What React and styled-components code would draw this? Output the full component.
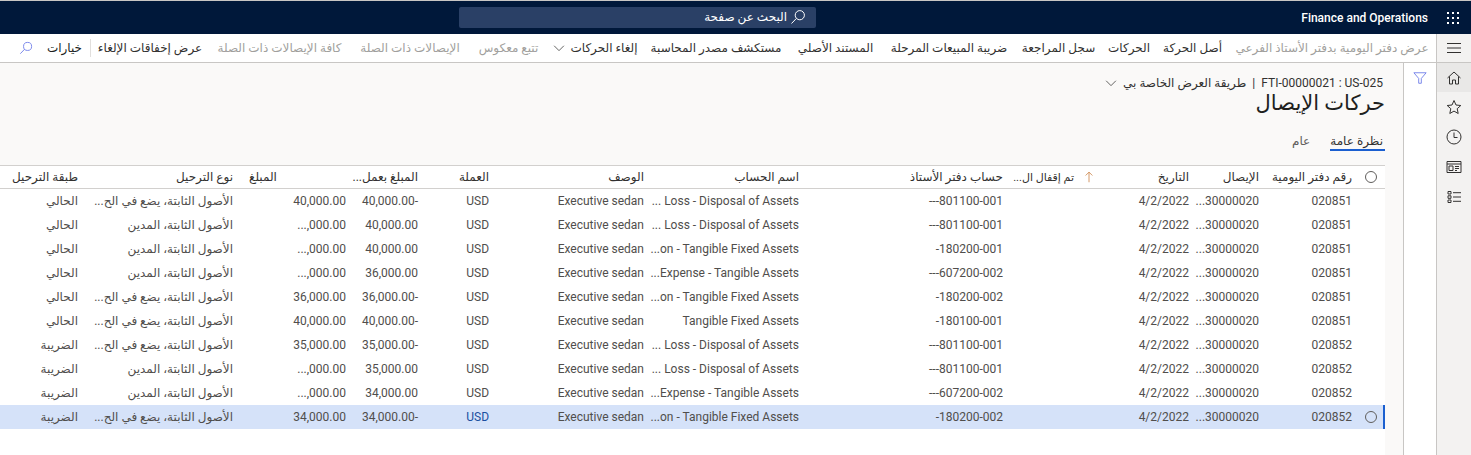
import React from 'react'
import styled, { createGlobalStyle } from 'styled-components'

const GlobalStyle = createGlobalStyle`
  html, body { margin: 0; padding: 0; height: 100%; background: #fff; }
  body { font-family: Roboto, "DejaVu Sans", sans-serif; font-size: 12px; color: #323130; overflow: hidden; }
  * { box-sizing: border-box; }
`

const columns = '25px 93px 70px 100px 86px 204px 155px 155px 71px 72px 113px 155px 86px'

const actions = [
  { label: 'عرض دفتر اليومية بدفتر الأستاذ الفرعي', width: 190, off: true },
  { label: 'أصل الحركة', width: 55 },
  { label: 'الحركات', width: 38 },
  { label: 'سجل المراجعة', width: 69 },
  { label: 'ضريبة المبيعات المرحلة', width: 116 },
  { label: 'المستند الأصلي', width: 77 },
  { label: 'مستكشف مصدر المحاسبة', width: 128 },
  { label: 'إلغاء الحركات', width: 79, menu: true },
  { label: 'تتبع معكوس', width: 61, off: true },
  { label: 'الإيصالات ذات الصلة', width: 102, off: true },
  { label: 'كافة الإيصالات ذات الصلة', width: 125, off: true },
  { label: 'عرض إخفاقات الإلغاء', width: 100 },
]

const headers = ['رقم دفتر اليومية', 'الإيصال', 'التاريخ', 'تم إقفال ال...', 'حساب دفتر الأستاذ', 'اسم الحساب', 'الوصف', 'العملة', 'المبلغ بعمل...', 'المبلغ', 'نوع الترحيل', 'طبقة الترحيل']

const LOSS = '... Loss - Disposal of Assets'
const DEP = '...on - Tangible Fixed Assets'
const EXP = '...Expense - Tangible Assets'
const CREDIT = 'الأصول الثابتة، يضع في الح...'
const DEBIT = 'الأصول الثابتة، المدين'
const CUT = '...,000.00'

const rows = [
  ['020851', '---801100-001', LOSS, '-40,000.00', '40,000.00', CREDIT, 'الحالي'],
  ['020851', '---801100-001', LOSS, '40,000.00', CUT, DEBIT, 'الحالي'],
  ['020851', '-180200-001', DEP, '40,000.00', CUT, DEBIT, 'الحالي'],
  ['020851', '---607200-002', EXP, '36,000.00', CUT, DEBIT, 'الحالي'],
  ['020851', '-180200-002', DEP, '-36,000.00', '36,000.00', CREDIT, 'الحالي'],
  ['020851', '-180100-001', 'Tangible Fixed Assets', '-40,000.00', '40,000.00', CREDIT, 'الحالي'],
  ['020852', '---801100-001', LOSS, '-35,000.00', '35,000.00', CREDIT, 'الضريبة'],
  ['020852', '---801100-001', LOSS, '35,000.00', CUT, DEBIT, 'الضريبة'],
  ['020852', '---607200-002', EXP, '34,000.00', CUT, DEBIT, 'الضريبة'],
  ['020852', '-180200-002', DEP, '-34,000.00', '34,000.00', CREDIT, 'الضريبة'],
]

const Page = styled.div`
  width: 1471px;
  height: 455px;
  display: flex;
  flex-direction: column;
  direction: rtl;
  overflow: hidden;
`

const NavBar = styled.header`
  flex: 0 0 34px;
  display: grid;
  grid-template-columns: 655px 357px 1fr;
  align-items: center;
  background: #00183a;
  border-top: 1px solid #c8c6c4;
`

const Brand = styled.div`
  display: flex;
  align-items: center;
  gap: 18px;
  padding-right: 11px;
  color: #fff;
  font-weight: 500;
  font-size: 12px;
`

const SearchBox = styled.div`
  height: 21px;
  margin-top: -1px;
  display: flex;
  align-items: center;
  gap: 3px;
  padding-right: 10px;
  background: #2a4066;
  border-radius: 2px;
  color: #fff;
`

const ActionRow = styled.div`
  flex: 0 0 29px;
  display: flex;
  background: #fff;
  border-bottom: 1px solid #c8c6c4;
`

const MenuCell = styled.div`
  flex: 0 0 35px;
  display: flex;
  align-items: center;
  justify-content: center;
  border-left: 1px solid #c8c6c4;
  background: #f3f2f1;
`

const ActionBar = styled.nav`
  flex: 1;
  display: flex;
  align-items: center;
  gap: 17px;
  padding-right: 9px;
  white-space: nowrap;
`

const Action = styled.span`
  flex: 0 0 ${p => p.$width}px;
  min-width: 0;
  display: inline-flex;
  align-items: center;
  justify-content: center;
  gap: 5px;
  color: ${p => (p.$off ? '#a19f9d' : '#323130')};

  svg {
    flex: none;
  }
`

const Options = styled.div`
  display: flex;
  align-items: center;
  gap: 14px;
  padding-right: 8px;
  margin-right: -8px;
  height: 18px;
  border-right: 1px solid #e1dfdd;
  font-weight: 500;
  color: #201f1e;
`

const Body = styled.div`
  flex: 1;
  min-height: 0;
  display: flex;
`

const Rail = styled.aside`
  flex: 0 0 35px;
  display: flex;
  flex-direction: column;
  background: #f3f2f1;
  border-left: 1px solid #c8c6c4;
`

const RailItem = styled.div`
  height: ${p => (p.$active ? 29 : 30)}px;
  display: flex;
  align-items: center;
  justify-content: center;
  background: ${p => (p.$active ? '#e9e8e7' : 'transparent')};
`

const FilterPane = styled.aside`
  flex: 0 0 33px;
  display: flex;
  justify-content: center;
  padding-top: 8px;
  background: #fff;
  border-left: 1px solid #c8c6c4;
`

const Content = styled.main`
  flex: 1;
  min-width: 0;
  display: flex;
  flex-direction: column;
  background: #faf9f8;
  padding: 12px 18px 0 0;
`

const Crumb = styled.div`
  display: flex;
  align-items: center;
  gap: 6px;
  height: 16px;
  padding-right: 2px;
  color: #323130;
`

const Title = styled.h1`
  margin: -2px 0 2px;
  height: 28px;
  line-height: 28px;
  font-size: 21px;
  font-weight: 400;
  color: #201f1e;
`

const Tabs = styled.div`
  display: flex;
  align-items: flex-start;
  gap: 18px;
  margin-top: 14px;
  height: 32px;
`

const Tab = styled.div`
  height: 18px;
  padding-right: 2px;
  line-height: 16px;
  color: ${p => (p.$active ? '#323130' : '#605e5c')};
  border-bottom: 2px solid ${p => (p.$active ? '#1a5fd0' : 'transparent')};
`

const Grid = styled.section`
  flex: 1;
  background: #fff;
  border-top: 1px solid #d2d0ce;
`

const HeadRow = styled.div`
  display: grid;
  grid-template-columns: ${columns};
  height: 23px;
  align-items: center;
  border-bottom: 1px solid #d2d0ce;
  color: #323130;
`

const DataRow = styled.div`
  position: relative;
  display: grid;
  grid-template-columns: ${columns};
  height: 24px;
  align-items: center;
  color: #504e4c;
  background: ${p => (p.$selected ? '#d5e2f9' : 'transparent')};
`

const SelectBar = styled.i`
  position: absolute;
  top: 0;
  bottom: 0;
  right: 0;
  width: 2px;
  background: #1a5fd0;
`

const Cell = styled.div`
  min-width: 0;
  padding: 0 8px;
  white-space: nowrap;
  color: ${p => p.$color || 'inherit'};
`

const HeadCell = styled(Cell)`
  text-align: ${p => (p.$end ? 'left' : 'right')};
`

const SortCell = styled(HeadCell)`
  display: flex;
  align-items: center;
  gap: 9px;
  padding-right: 2px;
  font-size: 11px;

  svg {
    flex: none;
  }
`

const CheckCell = styled.div`
  display: flex;
  justify-content: center;
  padding-right: 3px;
`

const Circle = styled.span`
  width: 12px;
  height: 12px;
  border: 1px solid #605e5c;
  border-radius: 50%;
`

const Ltr = styled.span`
  direction: ltr;
  unicode-bidi: isolate;
`

const Icon = ({ size = 16, color = '#323130', children }) => (
  <svg width={size} height={size} viewBox="0 0 16 16" fill="none" stroke={color} strokeWidth="1">
    {children}
  </svg>
)

const SearchIcon = ({ color, size = 16 }) => (
  <Icon size={size} color={color}>
    <circle cx="9.8" cy="6.2" r="4.6" />
    <path d="M6.4 9.4 1.5 14.5" />
  </Icon>
)

const Chevron = () => (
  <Icon size={12}>
    <path d="M1.5 5 8 11.5 14.5 5" />
  </Icon>
)

const AppsIcon = () => (
  <svg width="14" height="14" viewBox="0 0 14 14" fill="#fff">
    {[1, 6, 11].map(y => [1, 6, 11].map(x => <rect key={`${x}-${y}`} x={x} y={y} width="2" height="2" />))}
  </svg>
)

const Breadcrumb = () => (
  <Crumb>
    <Ltr>FTI-00000021 : US-025</Ltr>
    <span>|</span>
    <span>طريقة العرض الخاصة بي</span>
    <Chevron />
  </Crumb>
)

export default function App() {
  return (
    <Page>
      <GlobalStyle />
      <NavBar>
        <Brand>
          <AppsIcon />
          <Ltr>Finance and Operations</Ltr>
        </Brand>
        <SearchBox>
          <SearchIcon color="#fff" />
          <span>البحث عن صفحة</span>
        </SearchBox>
        <div />
      </NavBar>

      <ActionRow>
        <MenuCell>
          <Icon>
            <path d="M1 3.500h14M1 8h14M1 12.500h14" />
          </Icon>
        </MenuCell>
        <ActionBar>
          {actions.map(a => (
            <Action key={a.label} $off={a.off} $width={a.width}>
              {a.label}
              {a.menu && <Chevron />}
            </Action>
          ))}
          <Options>
            <span>خيارات</span>
            <SearchIcon color="#6b7ae8" size={14} />
          </Options>
        </ActionBar>
      </ActionRow>

      <Body>
        <Rail>
          <RailItem $active>
            <Icon>
              <path d="M1.500 8 8 2l6.500 6M3.500 6.500V14h3v-4h3v4h3V6.500" />
            </Icon>
          </RailItem>
          <RailItem>
            <Icon>
              <path d="m8 1.500 2 4.500 4.800.5-3.600 3.200 1 4.800L8 12.100 3.800 14.500l1-4.800L1.200 6.500 6 6z" />
            </Icon>
          </RailItem>
          <RailItem>
            <Icon>
              <circle cx="8" cy="8" r="7" />
              <path d="M8 3.500V8.500h3.500" />
            </Icon>
          </RailItem>
          <RailItem>
            <Icon>
              <path d="M1 2.500h14v11H1zM1 5h14" />
              <path d="M3 7h4v4.500H3zM9 7.500h4M9 9.500h4M9 11.500h2" />
            </Icon>
          </RailItem>
          <RailItem>
            <Icon>
              <path d="M2 2.500h3v2.500H2zM2 6.800h3v2.500H2zM2 11h3v2.500H2zM7 3.700h8M7 8h8M7 12.300h8" />
            </Icon>
          </RailItem>
        </Rail>

        <FilterPane>
          <Icon color="#6b7ae8" size={14}>
            <path d="M1 2h14L9.500 8.500V14h-3V8.500z" />
          </Icon>
        </FilterPane>

        <Content>
          <Breadcrumb />
          <Title>حركات الإيصال</Title>
          <Tabs>
            <Tab $active>نظرة عامة</Tab>
            <Tab>عام</Tab>
          </Tabs>
          <Grid>
            <HeadRow>
              <CheckCell>
                <Circle />
              </CheckCell>
              {headers.map((h, i) => {
                if (i === 3) {
                  return (
                    <SortCell key={h}>
                      <Icon size={12} color="#c77a3a">
                        <path d="M8 15V1.500M3.500 6 8 1.500 12.500 6" />
                      </Icon>
                      <span>{h}</span>
                    </SortCell>
                  )
                }
                return (
                  <HeadCell key={h} $end={i === 9}>
                    {h}
                  </HeadCell>
                )
              })}
            </HeadRow>
            {rows.map((r, i) => {
              const selected = i === rows.length - 1
              return (
                <DataRow key={i} $selected={selected}>
                  {selected && <SelectBar />}
                  <CheckCell>{selected && <Circle />}</CheckCell>
                  <Cell>{r[0]}</Cell>
                  <Cell><Ltr>...30000020</Ltr></Cell>
                  <Cell>4/2/2022</Cell>
                  <Cell />
                  <Cell><Ltr>{r[1]}</Ltr></Cell>
                  <Cell><Ltr>{r[2]}</Ltr></Cell>
                  <Cell>Executive sedan</Cell>
                  <Cell $color={selected ? '#1a4fa0' : undefined}>USD</Cell>
                  <Cell>{r[3]}</Cell>
                  <Cell><Ltr>{r[4]}</Ltr></Cell>
                  <Cell>{r[5]}</Cell>
                  <Cell>{r[6]}</Cell>
                </DataRow>
              )
            })}
          </Grid>
        </Content>
      </Body>
    </Page>
  )
}
